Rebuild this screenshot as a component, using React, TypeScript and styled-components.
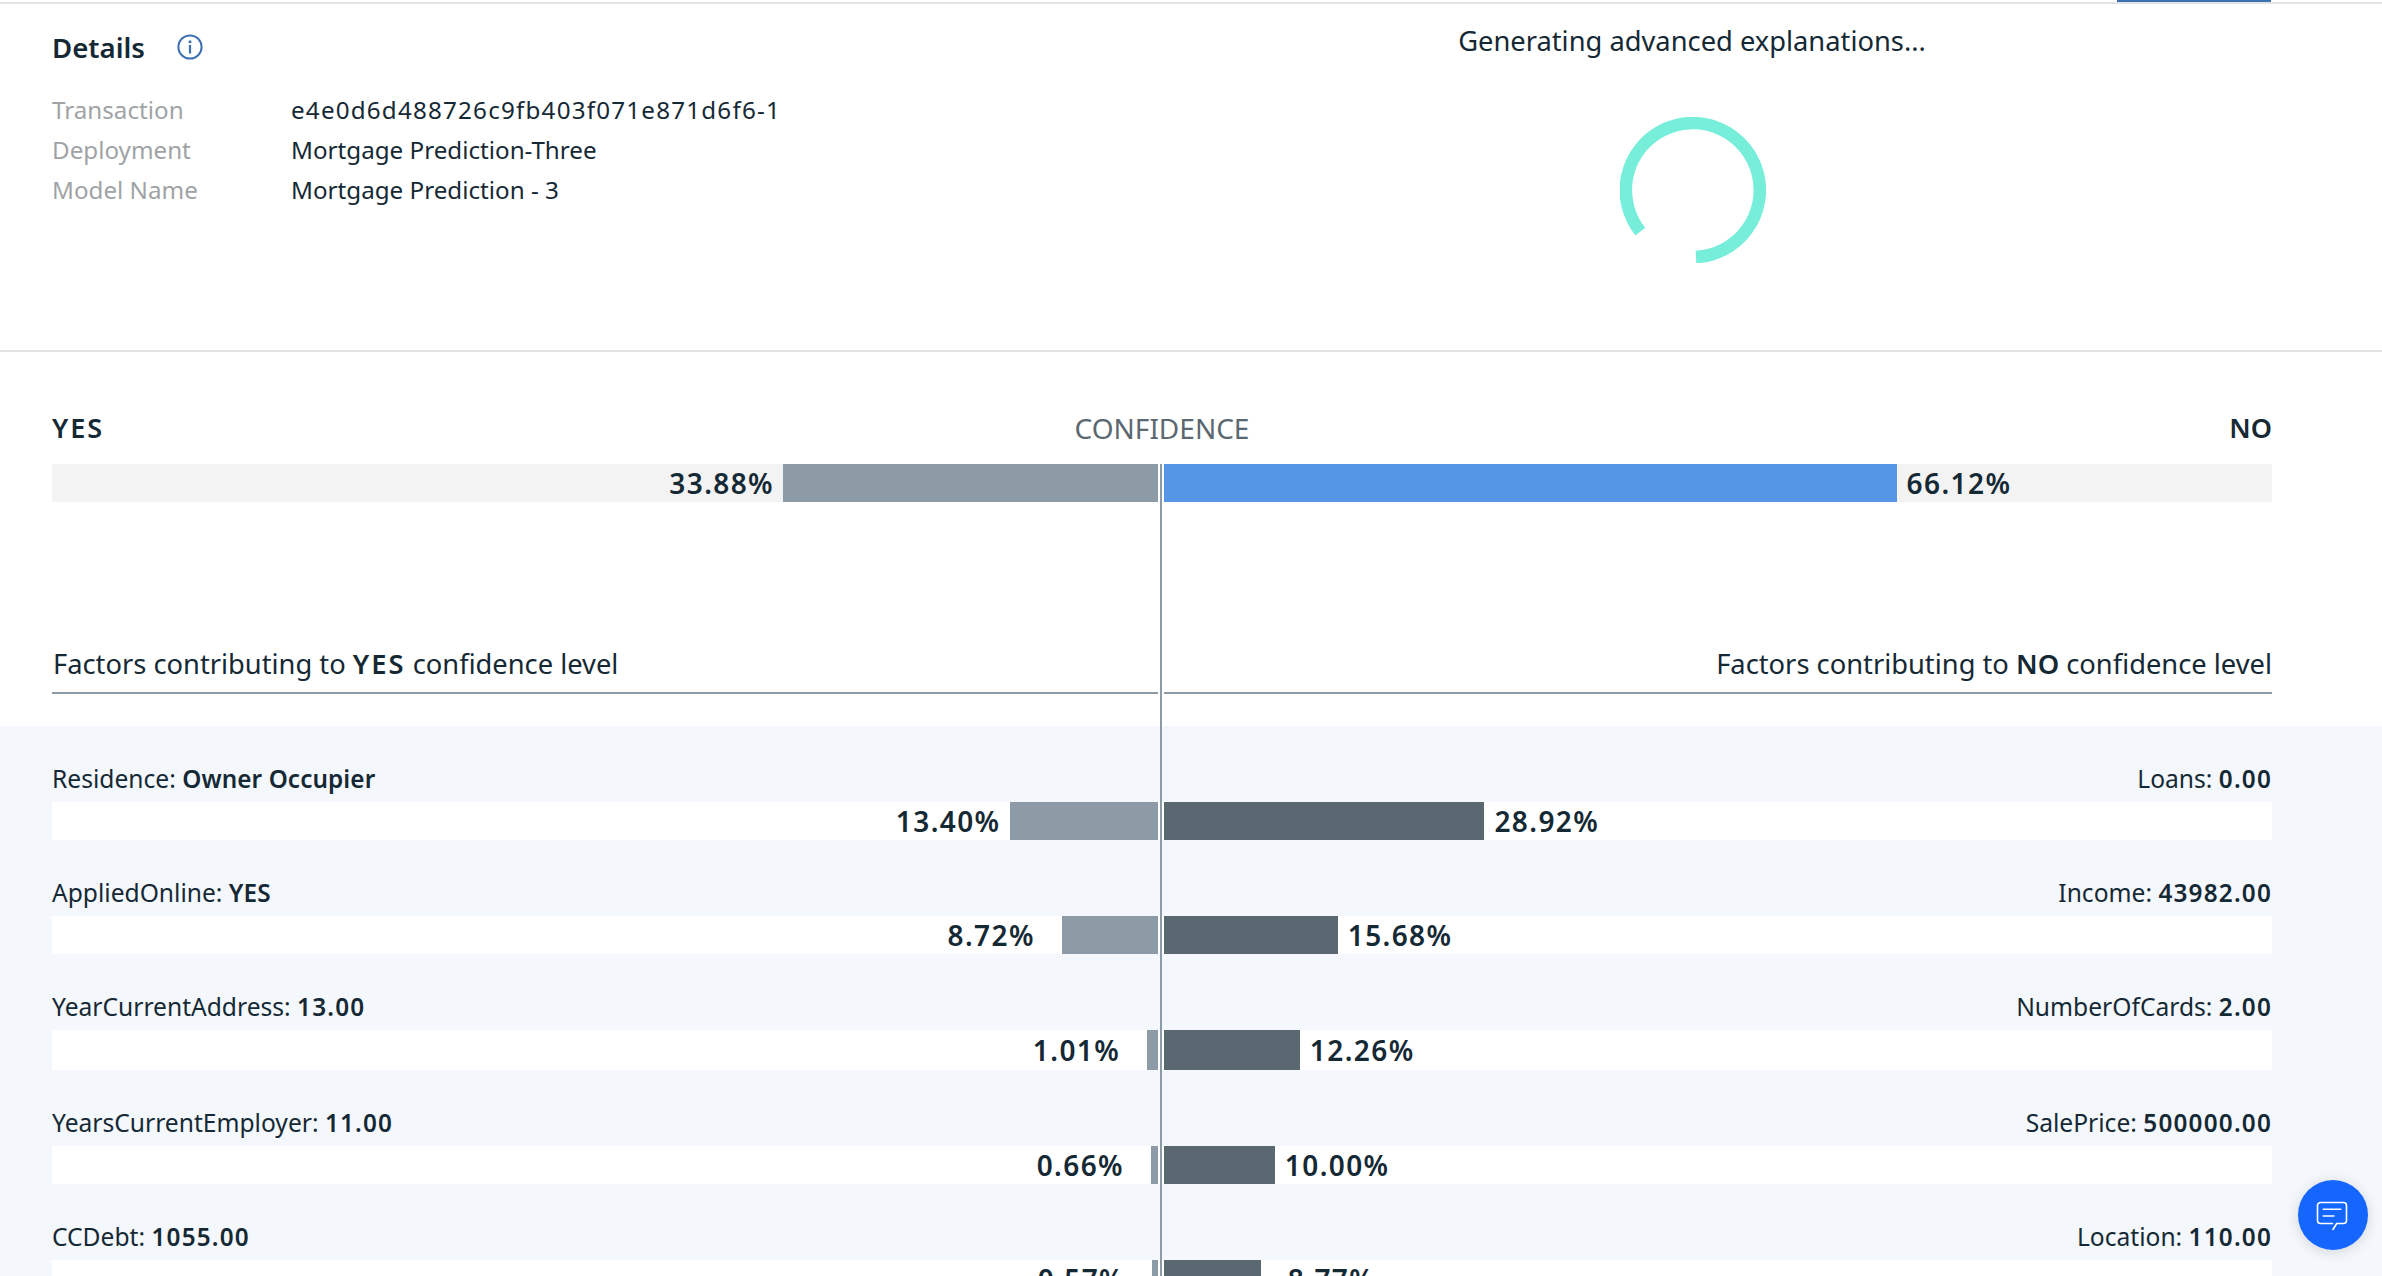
import React from "react";
import styled, { createGlobalStyle } from "styled-components";

const Global = createGlobalStyle`
  html, body { margin: 0; padding: 0; background: #fff; }
  body { font-family: "Noto Sans", "Open Sans", Arial, sans-serif; color: #152935; }
`;

const Page = styled.div`
  position: relative;
  width: 2382px;
  height: 1276px;
  overflow: hidden;
  background: #fff;
`;

const TabStrip = styled.div`
  height: 2px;
  padding-left: 2117px;
`;

const TabIndicator = styled.div`
  width: 154px;
  height: 2px;
  background: #3d70b2;
`;

const DetailsPanel = styled.section`
  display: grid;
  grid-template-columns: 1002px 1fr;
  height: 346px;
  border-top: 2px solid #dfe3e6;
  border-bottom: 2px solid #dfe3e6;
`;

const DetailsColumn = styled.div`
  padding: 25px 0 0 52px;
`;

const TitleRow = styled.div`
  display: flex;
  align-items: center;
  gap: 32px;
  height: 36px;
  margin-bottom: 25px;
`;

const Title = styled.h2`
  margin: 0;
  font-size: 27.6px;
  font-weight: 600;
  line-height: 36px;
`;

const InfoGrid = styled.dl`
  display: grid;
  grid-template-columns: 239px 1fr;
  grid-auto-rows: 40px;
  margin: 0;
  font-size: 24.2px;
  line-height: 40px;
`;

const InfoKey = styled.dt`
  color: #a0a3a5;
`;

const InfoValue = styled.dd<{ $spaced?: boolean }>`
  margin: 0;
  letter-spacing: ${(p) => (p.$spaced ? "1.2px" : "0")};
`;

const ProgressColumn = styled.div`
  display: flex;
  flex-direction: column;
  align-items: center;
  padding-top: 19px;
`;

const ProgressText = styled.div`
  font-size: 27.3px;
  line-height: 36px;
`;

const Spinner = styled.svg`
  display: block;
  width: 146px;
  height: 146px;
  margin: 58px 0 0 2px;
`;

const ConfidencePanel = styled.section`
  padding: 58px 110px 0 52px;
`;

const ConfidenceHead = styled.div`
  display: grid;
  grid-template-columns: 1fr auto 1fr;
  align-items: center;
  height: 36px;
  margin-bottom: 18px;
  font-size: 27px;
  line-height: 36px;
`;

const Answer = styled.div<{ $end?: boolean }>`
  font-weight: 600;
  letter-spacing: ${(p) => (p.$end ? "0" : "2px")};
  text-align: ${(p) => (p.$end ? "right" : "left")};
`;

const ConfidenceLabel = styled.div`
  font-size: 28px;
  color: #5a6872;
`;

const Track = styled.div<{ $height: number }>`
  display: grid;
  grid-template-columns: 1106px 1108px;
  column-gap: 6px;
  height: ${(p) => p.$height}px;
  background: #fff;
`;

const Half = styled.div<{ $end?: boolean; $bg: string }>`
  display: flex;
  align-items: center;
  justify-content: ${(p) => (p.$end ? "flex-start" : "flex-end")};
  background: ${(p) => p.$bg};
`;

const Fill = styled.div<{ $color: string }>`
  height: 100%;
  flex: none;
  background: ${(p) => p.$color};
`;

const Percent = styled.div<{ $end?: boolean }>`
  flex: none;
  width: 104px;
  margin: ${(p) => (p.$end ? "0 0 0 10px" : "0 10px 0 0")};
  text-align: ${(p) => (p.$end ? "right" : "left")};
  font-size: 28px;
  font-weight: 600;
  letter-spacing: 1.4px;
  line-height: 38px;
  white-space: nowrap;
`;

const FactorsHead = styled.div`
  display: grid;
  grid-template-columns: 1106px 1108px;
  column-gap: 6px;
  margin-top: 144px;
`;

const FactorsTitle = styled.div<{ $end?: boolean }>`
  padding-bottom: 10px;
  padding-left: ${(p) => (p.$end ? "0" : "1px")};
  border-bottom: 2px solid #8c9ba5;
  font-size: 27.3px;
  line-height: 36px;
  text-align: ${(p) => (p.$end ? "right" : "left")};
`;

const Emphasis = styled.b<{ $spaced?: boolean }>`
  font-weight: 600;
  letter-spacing: ${(p) => (p.$spaced ? "2px" : "0")};
`;

const FactorsPanel = styled.section`
  display: flex;
  flex-direction: column;
  gap: 37px;
  margin-top: 32px;
  padding: 37px 110px 0 52px;
  height: 600px;
  background: #f4f7fb;
`;

const FactorRow = styled.div``;

const LabelRow = styled.div`
  display: flex;
  justify-content: space-between;
  height: 32px;
  margin-bottom: 7px;
  font-size: 24.6px;
  line-height: 32px;
`;

const Label = styled.span`
  white-space: nowrap;
`;

const LabelValue = styled.b<{ $numeric: boolean }>`
  font-size: 24.3px;
  font-weight: 600;
  letter-spacing: ${(p) => (p.$numeric ? "1.2px" : "0.1px")};
`;

const CenterLine = styled.div`
  position: absolute;
  left: 1160px;
  top: 464px;
  bottom: 0;
  width: 2px;
  background: #8c9ba5;
`;

const ChatButton = styled.button`
  position: absolute;
  left: 2298px;
  top: 1180px;
  display: flex;
  align-items: center;
  justify-content: center;
  width: 70px;
  height: 70px;
  padding: 0;
  border: 0;
  border-radius: 50%;
  background: #1466ff;
  box-shadow: 0 2px 14px rgba(0, 0, 0, 0.14);
`;

const factors = [
  { lk: "Residence", lv: "Owner Occupier", lp: 13.4, rk: "Loans", rv: "0.00", rp: 28.92, h: 38 },
  { lk: "AppliedOnline", lv: "YES", lp: 8.72, rk: "Income", rv: "43982.00", rp: 15.68, h: 38 },
  { lk: "YearCurrentAddress", lv: "13.00", lp: 1.01, rk: "NumberOfCards", rv: "2.00", rp: 12.26, h: 40 },
  { lk: "YearsCurrentEmployer", lv: "11.00", lp: 0.66, rk: "SalePrice", rv: "500000.00", rp: 10.0, h: 38 },
  { lk: "CCDebt", lv: "1055.00", lp: 0.57, rk: "Location", rv: "110.00", rp: 8.77, h: 38 },
];

const isNumeric = (v: string) => /^[\d.]+$/.test(v);

const Bars = ({ left, right, leftColor, rightColor, bg, height = 38 }: { left: number; right: number; leftColor: string; rightColor: string; bg: string; height?: number }) => (
  <Track $height={height}>
    <Half $bg={bg}>
      <Percent>{left.toFixed(2)}%</Percent>
      <Fill $color={leftColor} style={{ width: `${left}%` }} />
    </Half>
    <Half $bg={bg} $end>
      <Fill $color={rightColor} style={{ width: `${right}%` }} />
      <Percent $end>{right.toFixed(2)}%</Percent>
    </Half>
  </Track>
);

export default function App() {
  return (
    <Page>
      <Global />
      <TabStrip>
        <TabIndicator />
      </TabStrip>
      <DetailsPanel>
        <DetailsColumn>
          <TitleRow>
            <Title>Details</Title>
            <svg width="26" height="26" viewBox="0 0 26 26" fill="none">
              <circle cx="13" cy="13" r="11.6" stroke="#3d70b2" strokeWidth="2" />
              <rect x="11.9" y="11" width="2.2" height="8.5" fill="#3d70b2" />
              <circle cx="13" cy="7.8" r="1.5" fill="#3d70b2" />
            </svg>
          </TitleRow>
          <InfoGrid>
            <InfoKey>Transaction</InfoKey>
            <InfoValue $spaced>e4e0d6d488726c9fb403f071e871d6f6-1</InfoValue>
            <InfoKey>Deployment</InfoKey>
            <InfoValue>Mortgage Prediction-Three</InfoValue>
            <InfoKey>Model Name</InfoKey>
            <InfoValue>Mortgage Prediction - 3</InfoValue>
          </InfoGrid>
        </DetailsColumn>
        <ProgressColumn>
          <ProgressText>Generating advanced explanations...</ProgressText>
          <Spinner viewBox="0 0 146 146" fill="none">
            <path d="M76 140 A67 67 0 1 0 20.3 114.7" stroke="#76eeda" strokeWidth="12.5" />
          </Spinner>
        </ProgressColumn>
      </DetailsPanel>
      <ConfidencePanel>
        <ConfidenceHead>
          <Answer>YES</Answer>
          <ConfidenceLabel>CONFIDENCE</ConfidenceLabel>
          <Answer $end>NO</Answer>
        </ConfidenceHead>
        <Bars left={33.88} right={66.12} leftColor="#8c9ba5" rightColor="#5596e6" bg="#f3f3f3" />
        <FactorsHead>
          <FactorsTitle>
            Factors contributing to <Emphasis $spaced>YES</Emphasis> confidence level
          </FactorsTitle>
          <FactorsTitle $end>
            Factors contributing to <Emphasis>NO</Emphasis> confidence level
          </FactorsTitle>
        </FactorsHead>
      </ConfidencePanel>
      <FactorsPanel>
        {factors.map((f) => (
          <FactorRow key={f.lk}>
            <LabelRow>
              <Label>
                {f.lk}: <LabelValue $numeric={isNumeric(f.lv)}>{f.lv}</LabelValue>
              </Label>
              <Label>
                {f.rk}: <LabelValue $numeric={isNumeric(f.rv)}>{f.rv}</LabelValue>
              </Label>
            </LabelRow>
            <Bars left={f.lp} right={f.rp} leftColor="#8c9ba5" rightColor="#5a6872" bg="#fff" height={f.h} />
          </FactorRow>
        ))}
      </FactorsPanel>
      <CenterLine />
      <ChatButton aria-label="Chat">
        <svg width="34" height="30" viewBox="0 0 34 30" fill="none" stroke="#fff" strokeWidth="1.6" strokeLinecap="round" strokeLinejoin="round">
          <path d="M16.5 23.5 H4.5 A3 3 0 0 1 1.5 20.5 V5.5 A3 3 0 0 1 4.5 2.5 H27.5 A3 3 0 0 1 30.5 5.5 V20.5 A3 3 0 0 1 27.5 23.5 H20.7 L17 29.5" />
          <path d="M7.3 9.3 H24.7 M7.3 16 H18" />
        </svg>
      </ChatButton>
    </Page>
  );
}
